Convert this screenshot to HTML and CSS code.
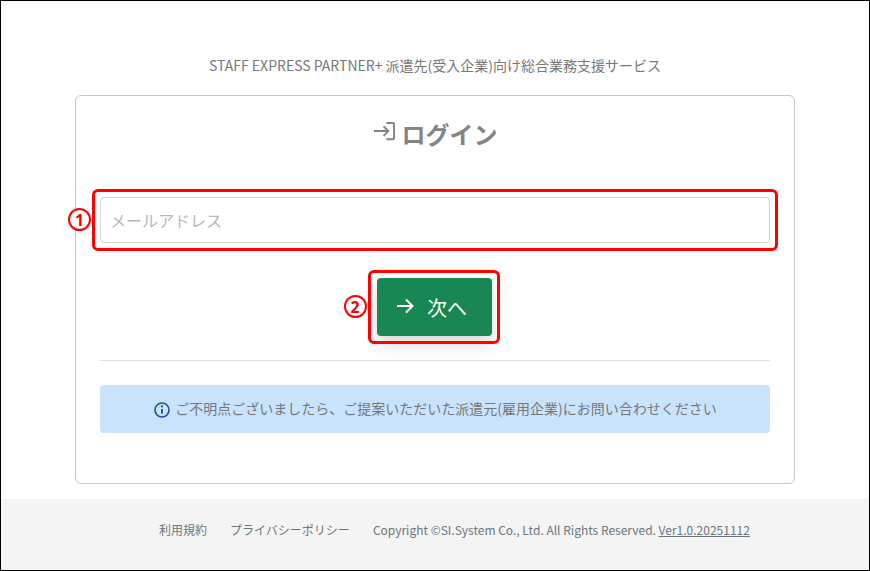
FILE: index.html
```html
<!DOCTYPE html>
<html lang="ja">
<head>
<meta charset="utf-8">
<title>ログイン</title>
<link rel="stylesheet" href="styles.css">
</head>
<body>
<div class="frame">
  <main class="main">
    <p class="service">STAFF EXPRESS PARTNER+ 派遣先(受入企業)向け総合業務支援サービス</p>
    <section class="card">
      <h1 class="title">
        <svg class="title-icon" viewBox="0 0 22 22" fill="none" stroke="currentColor" stroke-width="2"><path d="M0 9.500h15M10 4.500l5 5-5 5"/><path d="M13 1h7a1 1 0 0 1 1 1v15a1 1 0 0 1-1 1h-7"/></svg>
        <span>ログイン</span>
      </h1>
      <div class="field">
        <input class="input" type="text" placeholder="メールアドレス">
        <span class="callout callout-field"></span>
        <span class="num num-1">1</span>
      </div>
      <div class="actions">
        <button class="btn" type="button">
          <svg class="btn-icon" viewBox="0 0 20 20" fill="none" stroke="currentColor" stroke-width="2"><path d="M2 10h15M11 3.500l6.500 6.500-6.500 6.500"/></svg>
          <span>次へ</span>
        </button>
        <span class="callout callout-btn"></span>
        <span class="num num-2">2</span>
      </div>
      <hr class="rule">
      <div class="alert">
        <svg class="alert-icon" viewBox="0 0 16 16" fill="none" stroke="currentColor"><circle cx="8" cy="8" r="7" stroke-width="1.600"/><path d="M8 7v4.800" stroke-width="1.800"/><circle cx="8" cy="4.400" r="1.100" fill="currentColor" stroke="none"/></svg>
        <span class="alert-text">ご不明点ございましたら、ご提案いただいた派遣元(雇用企業)にお問い合わせください</span>
      </div>
    </section>
  </main>
  <footer class="footer">
    <a class="foot-link" href="#">利用規約</a>
    <a class="foot-link" href="#">プライバシーポリシー</a>
    <span class="copy">Copyright ©SI.System Co., Ltd. All Rights Reserved. <a class="ver" href="#">Ver1.0.20251112</a></span>
  </footer>
</div>
</body>
</html>
```
FILE: styles.css
```css
* { box-sizing: border-box; }
html, body { margin: 0; padding: 0; }
body {
  width: 870px;
  height: 571px;
  overflow: hidden;
  font-family: "Noto Sans CJK JP", "Noto Sans", sans-serif;
  color: #777;
  background: #fff;
}
.frame {
  width: 870px;
  height: 571px;
  border: 1px solid #000;
  display: flex;
  flex-direction: column;
}
.main {
  flex: 1;
  display: flex;
  flex-direction: column;
  align-items: center;
  padding-top: 54px;
}
.service {
  margin: 0 0 20px;
  font-size: 14px;
  line-height: 20px;
  color: #777;
}
.card {
  width: 720px;
  height: 389px;
  border: 1px solid #c8c8c8;
  border-radius: 6px;
  padding: 23px 24px 24px;
  background: #fff;
}
.title {
  margin: 0;
  height: 30px;
  display: flex;
  justify-content: center;
  align-items: center;
  gap: 7px;
  font-size: 24px;
  line-height: 30px;
  font-weight: 700;
  color: #848484;
  padding-left: 1px;
}
.title-icon { width: 21px; height: 21px; margin-top: -3px; }
.field { position: relative; margin-top: 48px; }
.input {
  display: block;
  width: 670px;
  height: 46px;
  padding: 0 9px;
  border: 1px solid #ced4da;
  border-radius: 4px;
  font-family: inherit;
  font-size: 16px;
  outline: none;
  background: #fff;
}
.input::placeholder { color: #b4b8bc; opacity: 1; }
.callout {
  position: absolute;
  border: 3px solid #f00;
  border-radius: 6px;
  pointer-events: none;
}
.callout-field { left: -8px; right: -8px; top: -8px; bottom: -8px; }
.num {
  position: absolute;
  width: 23px;
  height: 23px;
  border: 2px solid #f00;
  border-radius: 50%;
  display: flex;
  align-items: center;
  justify-content: center;
  color: #f00;
  font-family: "Noto Sans", sans-serif;
  font-size: 16px;
  font-weight: 700;
  line-height: 1;
  background: #fff;
}
.num-1 { left: -32px; top: 11px; }
.actions {
  position: relative;
  margin: 35px auto 0;
  width: 115px;
  height: 58px;
  transform: translateX(-1px);
}
.btn {
  width: 115px;
  height: 58px;
  display: flex;
  align-items: center;
  justify-content: center;
  gap: 12px;
  padding: 0 6px 0 0;
  border: 0;
  border-radius: 4px;
  background: #198754;
  color: #fff;
  font-family: inherit;
  font-size: 20px;
  box-shadow: 0 8px 16px rgba(0, 0, 0, .15);
}
.btn-icon { width: 20px; height: 20px; margin-top: -2px; }
.callout-btn { left: -9px; right: -8px; top: -8px; bottom: -8px; }
.num-2 { left: -33px; top: 17px; }
.rule {
  margin: 24px 0 24px;
  border: 0;
  border-top: 1px solid #dee2e6;
}
.alert {
  height: 48px;
  display: flex;
  align-items: center;
  justify-content: center;
  gap: 5px;
  padding-left: 1px;
  background: #c9e3fd;
  border-radius: 4px;
  font-size: 14px;
  color: #777;
}
.alert-text { margin-top: -2px; }
.alert-icon { width: 16px; height: 16px; color: #1f4f8f; flex: none; margin-top: 2px; }
.footer {
  height: 71px;
  background: #f4f4f4;
  display: flex;
  align-items: center;
  justify-content: center;
  gap: 23px;
  padding: 0 0 10px 39px;
  font-size: 12px;
  color: #6c757d;
}
.foot-link { color: #6c757d; text-decoration: none; }
.ver { color: #6c757d; text-decoration: underline; }
```
